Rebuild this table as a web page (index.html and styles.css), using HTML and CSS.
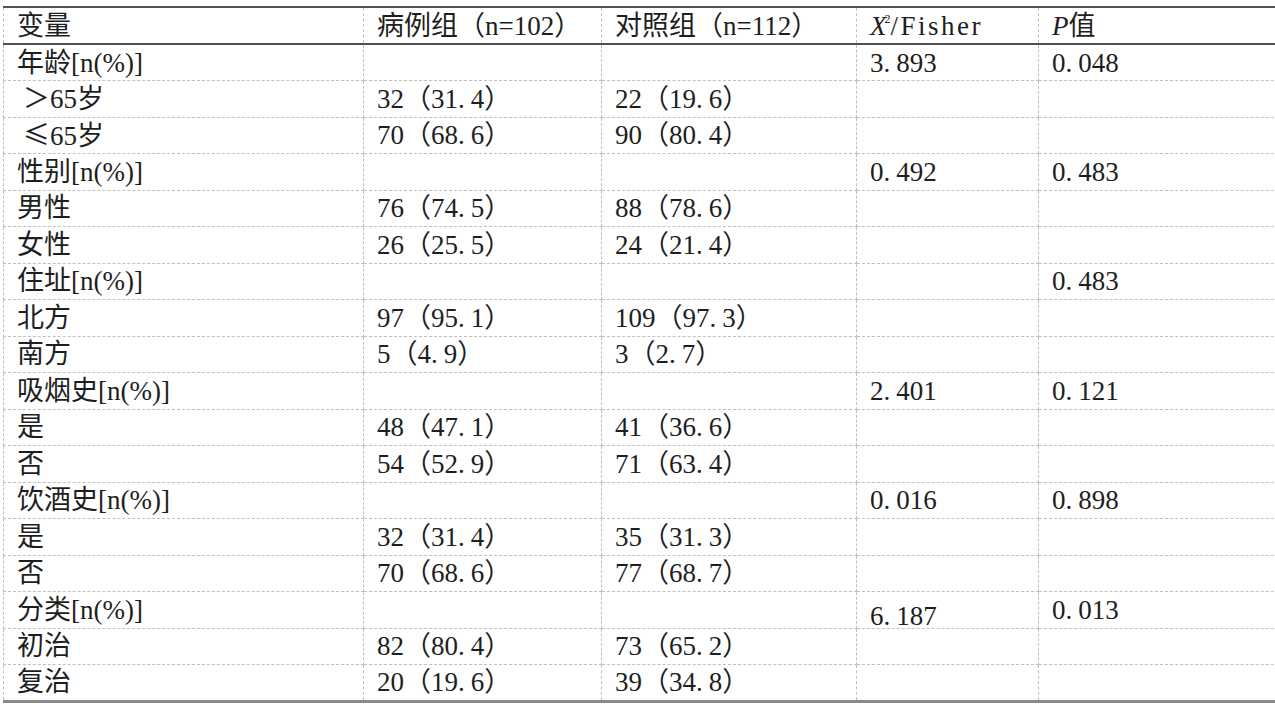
FILE: index.html
```html
<!DOCTYPE html>
<html lang="zh-CN">
<head>
<meta charset="utf-8">
<title>基线资料比较</title>
<link rel="stylesheet" href="styles.css">
</head>
<body>
<table class="stats">
  <colgroup>
    <col class="c1"><col class="c2"><col class="c3"><col class="c4"><col class="c5">
  </colgroup>
  <thead>
    <tr>
      <th>变量</th>
      <th>病例组（n=102）</th>
      <th>对照组（n=112）</th>
      <th><i>X</i><sup>2</sup><span class="mono">/Fisher</span></th>
      <th><i>P</i>值</th>
    </tr>
  </thead>
  <tbody>
    <tr><td>年龄[n(%)]</td><td></td><td></td><td>3<span class="pt">.</span>893</td><td>0<span class="pt">.</span>048</td></tr>
    <tr><td class="ind">＞65岁</td><td>32（31<span class="pt">.</span>4）</td><td>22（19<span class="pt">.</span>6）</td><td></td><td></td></tr>
    <tr><td class="ind"><span class="cjk">≤</span>65岁</td><td>70（68<span class="pt">.</span>6）</td><td>90（80<span class="pt">.</span>4）</td><td></td><td></td></tr>
    <tr><td>性别[n(%)]</td><td></td><td></td><td>0<span class="pt">.</span>492</td><td>0<span class="pt">.</span>483</td></tr>
    <tr><td>男性</td><td>76（74<span class="pt">.</span>5）</td><td>88（78<span class="pt">.</span>6）</td><td></td><td></td></tr>
    <tr><td>女性</td><td>26（25<span class="pt">.</span>5）</td><td>24（21<span class="pt">.</span>4）</td><td></td><td></td></tr>
    <tr><td>住址[n(%)]</td><td></td><td></td><td></td><td>0<span class="pt">.</span>483</td></tr>
    <tr><td>北方</td><td>97（95<span class="pt">.</span>1）</td><td>109（97<span class="pt">.</span>3）</td><td></td><td></td></tr>
    <tr><td>南方</td><td>5（4<span class="pt">.</span>9）</td><td>3（2<span class="pt">.</span>7）</td><td></td><td></td></tr>
    <tr><td>吸烟史[n(%)]</td><td></td><td></td><td>2<span class="pt">.</span>401</td><td>0<span class="pt">.</span>121</td></tr>
    <tr><td>是</td><td>48（47<span class="pt">.</span>1）</td><td>41（36<span class="pt">.</span>6）</td><td></td><td></td></tr>
    <tr><td>否</td><td>54（52<span class="pt">.</span>9）</td><td>71（63<span class="pt">.</span>4）</td><td></td><td></td></tr>
    <tr><td>饮酒史[n(%)]</td><td></td><td></td><td>0<span class="pt">.</span>016</td><td>0<span class="pt">.</span>898</td></tr>
    <tr><td>是</td><td>32（31<span class="pt">.</span>4）</td><td>35（31<span class="pt">.</span>3）</td><td></td><td></td></tr>
    <tr><td>否</td><td>70（68<span class="pt">.</span>6）</td><td>77（68<span class="pt">.</span>7）</td><td></td><td></td></tr>
    <tr><td>分类[n(%)]</td><td></td><td></td><td class="low">6<span class="pt">.</span>187</td><td>0<span class="pt">.</span>013</td></tr>
    <tr><td>初治</td><td>82（80<span class="pt">.</span>4）</td><td>73（65<span class="pt">.</span>2）</td><td></td><td></td></tr>
    <tr><td>复治</td><td>20（19<span class="pt">.</span>6）</td><td>39（34<span class="pt">.</span>8）</td><td></td><td></td></tr>
  </tbody>
</table>
</body>
</html>
```

FILE: styles.css
```css
html, body {
  margin: 0;
  padding: 0;
  background: #ffffff;
  overflow: hidden;
}

body {
  padding: 6px 0 0 3px;
  font-family: "Liberation Serif", "Noto Sans CJK SC", serif;
  font-size: 27px;
  color: #1e1e1e;
}

.stats {
  border-collapse: collapse;
  table-layout: fixed;
  width: 1290px;
  border-top: 2px solid #505050;
  border-bottom: 3px solid #8a8a8a;
}

.c1 { width: 360px; }
.c2 { width: 238px; }
.c3 { width: 255px; }
.c4 { width: 182px; }
.c5 { width: 255px; }

.stats th,
.stats td {
  height: 36.5px;
  padding: 0 0 0 13px;
  line-height: 30px;
  text-align: left;
  font-weight: normal;
  vertical-align: middle;
  white-space: nowrap;
  border: 1px dashed #c0c0c0;
  box-sizing: border-box;
}

.stats tr:first-child th,
.stats tr:first-child td {
  border-top: none;
}

.stats th:last-child,
.stats td:last-child {
  border-right: none;
}

.stats thead th {
  height: 37px;
  border-bottom: 2px solid #505050;
}

.stats tbody tr:last-child td {
  border-bottom: 3px solid #8a8a8a;
}

.stats sup {
  font-size: 12px;
  line-height: 0;
  vertical-align: 12px;
  margin-left: -2px;
}

.stats i {
  font-style: italic;
}

.mono {
  letter-spacing: 2.5px;
}

.cjk {
  font-family: "Noto Sans CJK SC", sans-serif;
}

.pt {
  letter-spacing: 6px;
}

.ind {
  padding-left: 19px;
}

.stats td.ind {
  padding-left: 19px;
}

.stats td.low {
  vertical-align: bottom;
  line-height: 24px;
}
```
